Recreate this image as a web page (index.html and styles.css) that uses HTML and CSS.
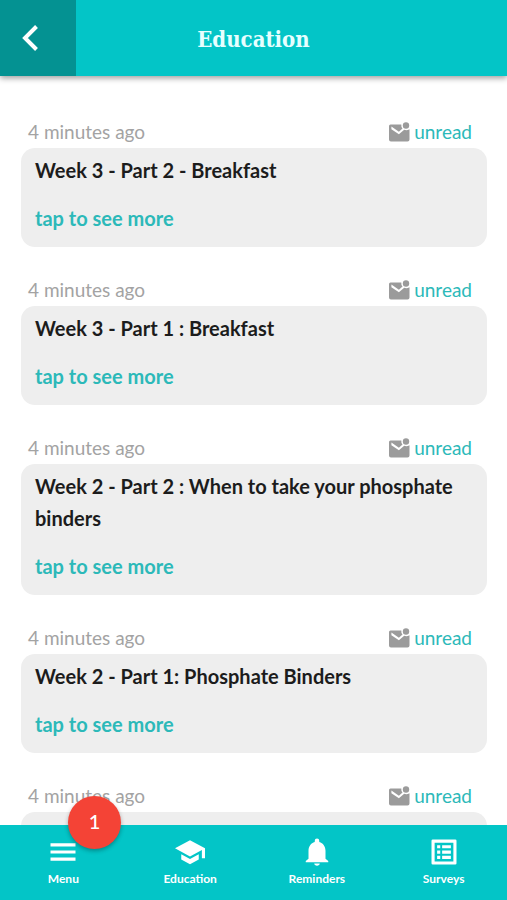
FILE: index.html
```html
<!DOCTYPE html>
<html lang="en">
<head>
  <meta charset="UTF-8">
  <meta name="viewport" content="width=device-width, initial-scale=1.0">
  <title>Education</title>
  <link rel="stylesheet" href="styles.css">
</head>
<body>
  <svg class="sprite" aria-hidden="true">
    <symbol id="mail" viewBox="0 0 22 20">
      <path fill="currentColor" d="M2.500 2.500h10.800a4.800 4.800 0 0 0 1.200 3.900l-3.600 3.300L3.400 4.600v2.700l7.500 5 5.300-4.500c1.600.7 3.500.5 5.300-.5V17.500a2 2 0 0 1-2 2H3a2 2 0 0 1-2-2V4a1.500 1.500 0 0 1 1.500-1.500z"/>
      <circle fill="currentColor" cx="18" cy="3.500" r="3.200"/>
    </symbol>
  </svg>

  <header class="header">
    <button class="back" type="button" aria-label="Back">
      <svg viewBox="0 0 20 30"><path d="M16.500 3.500 5 15l11.500 11.500" fill="none" stroke="currentColor" stroke-width="4"/></svg>
    </button>
    <h1>Education</h1>
  </header>

  <main class="messages">
    <article class="message">
      <div class="meta">
        <span class="time">4 minutes ago</span>
        <span class="status"><svg><use href="#mail"/></svg>unread</span>
      </div>
      <div class="card">
        <h2>Week 3 - Part 2 - Breakfast</h2>
        <a href="#">tap to see more</a>
      </div>
    </article>

    <article class="message">
      <div class="meta">
        <span class="time">4 minutes ago</span>
        <span class="status"><svg><use href="#mail"/></svg>unread</span>
      </div>
      <div class="card">
        <h2>Week 3 - Part 1 : Breakfast</h2>
        <a href="#">tap to see more</a>
      </div>
    </article>

    <article class="message">
      <div class="meta">
        <span class="time">4 minutes ago</span>
        <span class="status"><svg><use href="#mail"/></svg>unread</span>
      </div>
      <div class="card">
        <h2>Week 2 - Part 2 : When to take your phosphate binders</h2>
        <a href="#">tap to see more</a>
      </div>
    </article>

    <article class="message">
      <div class="meta">
        <span class="time">4 minutes ago</span>
        <span class="status"><svg><use href="#mail"/></svg>unread</span>
      </div>
      <div class="card">
        <h2>Week 2 - Part 1: Phosphate Binders</h2>
        <a href="#">tap to see more</a>
      </div>
    </article>

    <article class="message">
      <div class="meta">
        <span class="time">4 minutes ago</span>
        <span class="status"><svg><use href="#mail"/></svg>unread</span>
      </div>
      <div class="card"></div>
    </article>
  </main>

  <nav class="tabs">
    <a href="#">
      <svg viewBox="0 0 24 24"><path d="M2 5h20v2.500H2zm0 5.700h20v2.500H2zm0 5.700h20v2.500H2z"/></svg>
      Menu
      <span class="badge">1</span>
    </a>
    <a href="#">
      <svg viewBox="0 0 24 24"><path d="M5 13.800v4.200l7 3.800 7-3.800v-4.200l-7 3.800-7-3.800zM12 2.500 0 9l12 6.500 9.500-5.200V17H24V9L12 2.500z"/></svg>
      Education
    </a>
    <a href="#">
      <svg viewBox="0 0 24 24"><path d="M12 23c1.200 0 2.200-.8 2.200-1.800H9.800c0 1 1 1.800 2.200 1.800zm6.800-5.700V11c0-3.500-1.900-6.300-5-7.100V3a1.800 1.800 0 0 0-3.600 0v.9c-3.100.8-5 3.600-5 7.100v6.300L3 19.200v1h18v-1l-2.200-1.900z"/></svg>
      Reminders
    </a>
    <a href="#">
      <svg viewBox="0 0 24 24"><path fill-rule="evenodd" d="M3 2h18a1 1 0 0 1 1 1v18a1 1 0 0 1-1 1H3a1 1 0 0 1-1-1V3a1 1 0 0 1 1-1zm1.500 2.500v15h15v-15z"/><path d="M6.500 6.500H9V9H6.500zm4 0h7V9h-7zm-4 4.300H9v2.500H6.500zm4 0h7v2.500h-7zm-4 4.200H9v2.500H6.500zm4 0h7v2.500h-7z"/></svg>
      Surveys
    </a>
  </nav>
</body>
</html>
```
FILE: styles.css
```css
:root {
  --teal: #03c5c7;
  --teal-dark: #049292;
  --teal-text: #2cb9b9;
  --card: #eeeeee;
  --grey: #a3a3a3;
  --red: #f44336;
}

* {
  box-sizing: border-box;
  margin: 0;
  padding: 0;
}

body {
  display: flex;
  flex-direction: column;
  height: 100vh;
  background-color: white;
  color: #1c1c1c;
  font-family: Lato, sans-serif;
  font-size: 19px;
  line-height: 32px;
}

a {
  text-decoration: none;
}

.sprite {
  position: absolute;
  width: 0;
  height: 0;
}

.header {
  display: grid;
  grid-template-columns: 76px 1fr 76px;
  align-items: center;
  flex: none;
  height: 76px;
  background-color: var(--teal);
  color: #e6ffff;
  box-shadow: 0 2px 6px rgba(0, 0, 0, 0.4);
  z-index: 1;
}

.header h1 {
  padding-top: 2px;
  font-family: 'DejaVu Serif Condensed', 'DejaVu Serif', serif;
  font-size: 22px;
  text-align: center;
}

.back {
  height: 100%;
  padding-right: 16px;
  border: none;
  background-color: var(--teal-dark);
  color: white;
  cursor: pointer;
}

.back svg {
  display: block;
  width: 20px;
  height: 30px;
  margin: 0 auto;
}

.messages {
  flex: 1;
  min-height: 0;
  padding: 40px 20px 0 21px;
  overflow-y: auto;
  scrollbar-width: none;
}

.message {
  margin-bottom: 27px;
}

.meta {
  display: flex;
  justify-content: space-between;
  padding: 0 15px 0 7px;
}

.time {
  color: var(--grey);
}

.status {
  display: flex;
  align-items: center;
  gap: 4px;
  color: var(--teal-text);
}

.status svg {
  width: 22px;
  height: 20px;
  color: #9b9b9b;
}

.card {
  min-height: 99px;
  padding: 6px 14px 13px;
  border-radius: 14px;
  background-color: var(--card);
}

.card h2 {
  margin-bottom: 16px;
  font-size: 20px;
}

.card a {
  display: block;
  color: var(--teal-text);
  font-size: 20px;
  font-weight: bold;
}

.tabs {
  display: grid;
  grid-template-columns: repeat(4, 1fr);
  flex: none;
  height: 75px;
  background-color: var(--teal);
}

.tabs a {
  position: relative;
  display: flex;
  flex-direction: column;
  align-items: center;
  padding-top: 12px;
  color: white;
  font-size: 12px;
  font-weight: bold;
  line-height: 24px;
}

.tabs svg {
  width: 30px;
  height: 30px;
  fill: currentColor;
}

.badge {
  position: absolute;
  top: -29px;
  left: 68px;
  width: 53px;
  height: 53px;
  border-radius: 50%;
  background-color: var(--red);
  box-shadow: 0 2px 4px rgba(0, 0, 0, 0.3);
  font-size: 20px;
  font-weight: 500;
  line-height: 51px;
  text-align: center;
}
```
